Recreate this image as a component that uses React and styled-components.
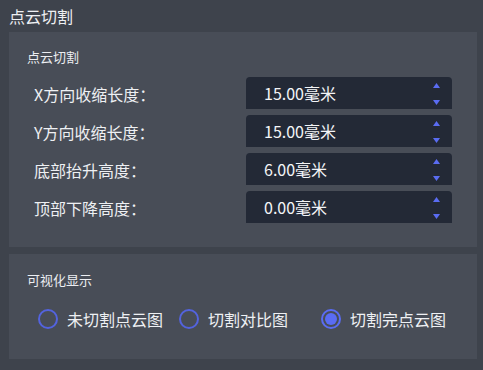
import React, { useState } from "react";
import styled, { createGlobalStyle } from "styled-components";

const Global = createGlobalStyle`
  html, body { margin: 0; padding: 0; background: #3e434c; }
  body { font-family: "Noto Sans CJK SC", "Noto Sans", sans-serif; }
`;

const Page = styled.div`
  width: 483px;
  height: 370px;
  box-sizing: border-box;
  background: #3e434c;
  color: #eef0f3;
  padding: 0 6px 0 9px;
  display: flex;
  flex-direction: column;
`;

const Title = styled.div`
  height: 32px;
  line-height: 33px;
  font-size: 16px;
`;

const Panel = styled.section`
  background: #484d57;
  box-sizing: border-box;
  padding: ${(p) => p.$pad};
  margin-bottom: 7px;
  display: flex;
  flex-direction: column;
`;

const SubTitle = styled.div`
  font-size: 13px;
  line-height: 18px;
  margin-left: 18px;
  margin-bottom: ${(p) => p.$mb}px;
  color: #eceef2;
`;

const Fields = styled.div`
  display: grid;
  grid-template-columns: 1fr 206px;
  grid-auto-rows: 32px;
  row-gap: 6px;
  padding: 0 25px 0 25px;
`;

const Label = styled.div`
  font-size: 16px;
  display: flex;
  align-items: center;
  padding-top: 1px;
`;

const Spin = styled.div`
  background: #232936;
  border-radius: 4px 4px 0 0;
  display: flex;
  align-items: center;
  justify-content: space-between;
  padding: 0 12px 0 18px;
  font-size: 16px;
  color: #f4f5f7;
`;

const Arrows = styled.div`
  display: flex;
  flex-direction: column;
  justify-content: space-between;
  height: 22px;
  margin-top: 1px;
`;

const Tri = ({ down }) => (
  <svg width="7" height="5" viewBox="0 0 7 5">
    <path d={down ? "M0 0H7L3.5 5Z" : "M3.5 0L7 5H0Z"} fill="#5a6cf2" />
  </svg>
);

const RadioRow = styled.div`
  display: grid;
  grid-template-columns: 141px 142px 1fr;
  padding-left: 29px;
  height: 20px;
`;

const RadioItem = styled.label`
  display: flex;
  align-items: center;
  gap: 9px;
  font-size: 16px;
  cursor: pointer;
`;

const Circle = styled.span`
  width: 20px;
  height: 20px;
  box-sizing: border-box;
  border-radius: 50%;
  border: 2px solid ${(p) => (p.$on ? "#5a6cf4" : "#5363de")};
  display: flex;
  align-items: center;
  justify-content: center;
  &::after {
    content: "";
    width: 12px;
    height: 12px;
    border-radius: 50%;
    background: #5a6cf4;
    display: ${(p) => (p.$on ? "block" : "none")};
  }
`;

const fields = [
  ["X方向收缩长度：", "15.00毫米"],
  ["Y方向收缩长度：", "15.00毫米"],
  ["底部抬升高度：", "6.00毫米"],
  ["顶部下降高度：", "0.00毫米"],
];

const options = ["未切割点云图", "切割对比图", "切割完点云图"];

export default function App() {
  const [sel, setSel] = useState(2);
  return (
    <>
      <Global />
      <Page>
        <Title>点云切割</Title>
        <Panel $pad="16px 0 24px 0">
          <SubTitle $mb={11}>点云切割</SubTitle>
          <Fields>
            {fields.map(([l, v]) => (
              <React.Fragment key={l}>
                <Label>{l}</Label>
                <Spin>
                  <span>{v}</span>
                  <Arrows>
                    <Tri />
                    <Tri down />
                  </Arrows>
                </Spin>
              </React.Fragment>
            ))}
          </Fields>
        </Panel>
        <Panel $pad="17px 0 32px 0">
          <SubTitle $mb={18}>可视化显示</SubTitle>
          <RadioRow>
            {options.map((o, i) => (
              <RadioItem key={o} onClick={() => setSel(i)}>
                <Circle $on={sel === i} />
                {o}
              </RadioItem>
            ))}
          </RadioRow>
        </Panel>
      </Page>
    </>
  );
}
